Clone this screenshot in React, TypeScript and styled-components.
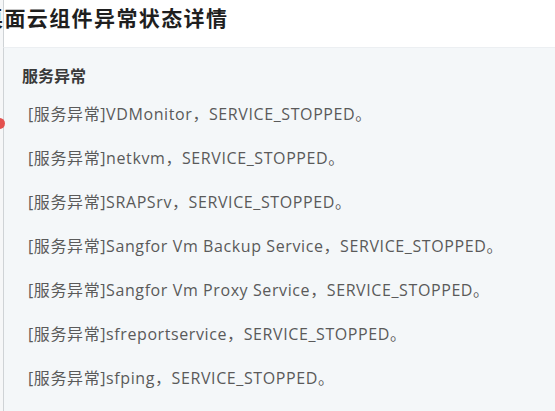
import styled, { createGlobalStyle } from "styled-components";

const GlobalStyle = createGlobalStyle`
	html, body {
		margin: 0;
		padding: 0;
		background: #f4f7f9;
		overflow: hidden;
	}
	#root {
		width: 555px;
		height: 411px;
	}
`;

const Page = styled.div`
	position: relative;
	width: 555px;
	height: 411px;
	overflow: hidden;
	font-family: "Open Sans", "Noto Sans CJK SC", sans-serif;
	background: #f6f7f8;
	display: flex;
	flex-direction: column;
`;

const Header = styled.div`
	height: 47px;
	flex-shrink: 0;
	margin-left: 3px;
	background: #ffffff;
	border-left: 1px solid #cfd3d6;
	border-bottom: 1px solid #eceff2;
	display: flex;
	align-items: center;

	h2 {
		margin: 0 0 13px -22px;
		font-family: "Noto Sans CJK SC", sans-serif;
		font-size: 21px;
		font-weight: 700;
		color: #1f1f1f;
		white-space: nowrap;
		letter-spacing: 1.4px;
	}
`;

const Body = styled.div`
	flex: 1;
	margin-left: 3px;
	border-left: 1px solid #cfd3d6;
	background: #f4f7f9;
	padding: 15px 0 0 18px;
`;

const SectionTitle = styled.div`
	font-family: "Noto Sans CJK SC", sans-serif;
	font-size: 16px;
	font-weight: 700;
	color: #3a3a3a;
	height: 24px;
	line-height: 24px;
	margin-bottom: 5px;
`;

const List = styled.ul`
	list-style: none;
	margin: 0;
	padding: 0 0 0 6px;
`;

const Item = styled.li`
	height: 44px;
	line-height: 44px;
	font-size: 16px;
	letter-spacing: 0.6px;
	color: #5a5a5a;
	white-space: nowrap;
`;

const Dot = styled.span`
	position: absolute;
	left: -6px;
	top: 118px;
	width: 11px;
	height: 11px;
	border-radius: 50%;
	background: #e4514f;
`;

const services = [
	"VDMonitor",
	"netkvm",
	"SRAPSrv",
	"Sangfor Vm Backup Service",
	"Sangfor Vm Proxy Service",
	"sfreportservice",
	"sfping",
];

export default function App() {
	return (
		<>
			<GlobalStyle />
			<Page>
				<Header>
					<h2>桌面云组件异常状态详情</h2>
				</Header>
				<Body>
					<SectionTitle>服务异常</SectionTitle>
					<List>
						{services.map((s) => (
							<Item key={s}>[服务异常]{s}，SERVICE_STOPPED。</Item>
						))}
					</List>
				</Body>
				<Dot />
			</Page>
		</>
	);
}
